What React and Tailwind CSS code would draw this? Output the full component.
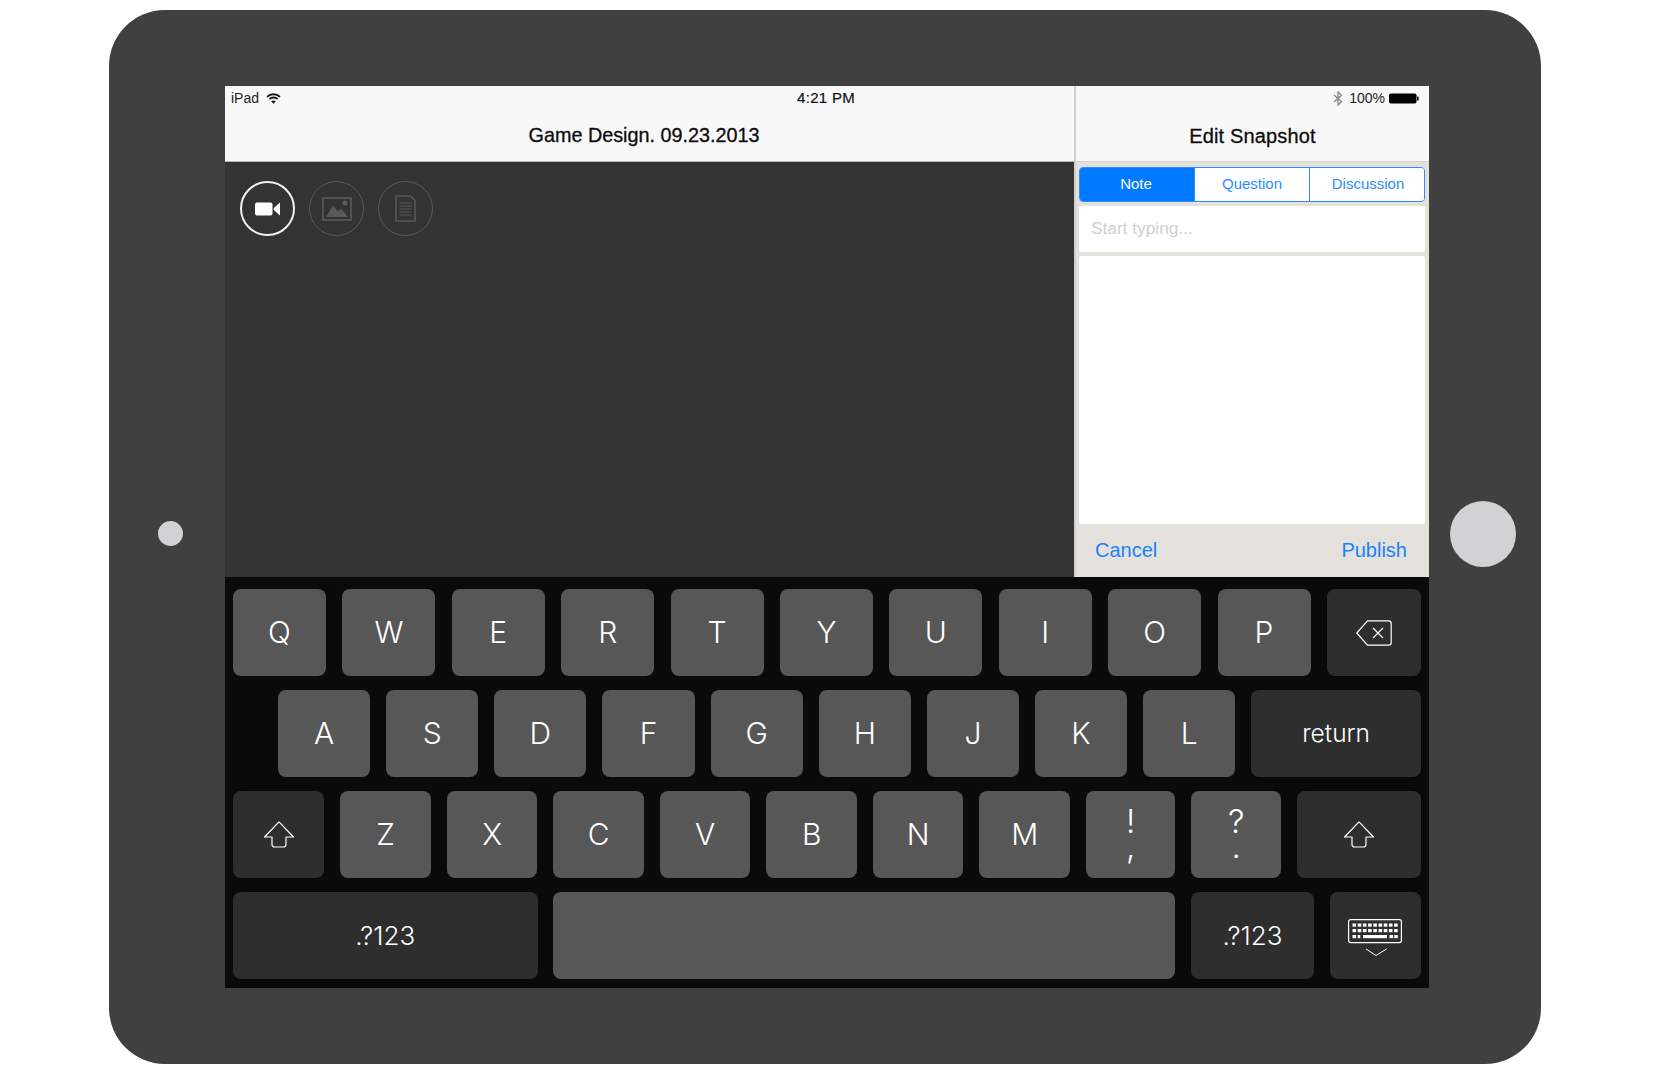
import React from "react";

const sans = "font-['Liberation_Sans',Arial,sans-serif]";

function Key({ children, dark, className = "" }) {
  return (
    <div
      className={`h-[87px] rounded-[8px] flex items-center justify-center text-white font-['Inter',sans-serif] font-[260] ${
        dark ? "bg-[#2e2e2e]" : "bg-[#575757]"
      } ${className}`}
    >
      {children}
    </div>
  );
}

function Letter({ k, w }) {
  return (
    <Key className={`${w} text-[30px]`}>
      {k}
    </Key>
  );
}

function PunctKey({ chars }) {
  return (
    <Key className="w-[89.5px] pb-[2px]">
      <span className="text-center text-[33px] leading-[25px] font-light whitespace-pre-line">{chars}</span>
    </Key>
  );
}

function ShiftIcon() {
  return (
    <svg width="30" height="27" viewBox="0 0 30 27" fill="none" stroke="white" strokeWidth="1.2" strokeLinejoin="round">
      <path d="M15 .8 L29.5 16 H22 V23.5 a2.5 2.5 0 0 1 -2.5 2.5 H10.5 a2.5 2.5 0 0 1 -2.5 -2.5 V16 H.5 Z" />
    </svg>
  );
}

function BackspaceIcon() {
  return (
    <svg width="36" height="26" viewBox="0 0 36 26" fill="none" stroke="white" strokeWidth="1.2" strokeLinejoin="round">
      <path d="M.8 13 L11.5 .8 H32.5 a2.7 2.7 0 0 1 2.7 2.7 V22.5 a2.7 2.7 0 0 1 -2.7 2.7 H11.5 Z" />
      <path d="M17 8 L27 18 M27 8 L17 18" />
    </svg>
  );
}

function KeyboardIcon() {
  const cols = [0, 1, 2, 3, 4, 5, 6, 7, 8];
  return (
    <svg width="54" height="40" viewBox="0 0 54 40" fill="none">
      <rect x=".6" y=".6" width="52.8" height="23" rx="2" stroke="white" strokeWidth="1.2" />
      {cols.map((c) => (
        <rect key={`a${c}`} x={4.5 + c * 5.2} y="4.5" width="3.6" height="3.2" fill="white" />
      ))}
      {cols.map((c) => (
        <rect key={`b${c}`} x={4.5 + c * 5.2} y="10" width="3.6" height="3.2" fill="white" />
      ))}
      <rect x="4.5" y="16" width="3.6" height="3.2" fill="white" />
      <rect x="9.7" y="16" width="2.6" height="3.2" fill="white" />
      <rect x="15" y="16" width="24" height="3.2" fill="white" />
      <rect x="41.5" y="16" width="3.6" height="3.2" fill="white" />
      <rect x="46.2" y="16" width="3.6" height="3.2" fill="white" />
      <path d="M18 30 L28 36.5 L38.5 30" stroke="white" strokeWidth="1" />
    </svg>
  );
}

function WifiIcon() {
  return (
    <svg width="15" height="11" viewBox="0 0 15 11" fill="none" stroke="#111" strokeWidth="1.8">
      <path d="M1 3.8 C4.6 .4 10.4 .4 14 3.8" />
      <path d="M3.4 6 C5.6 4 9.4 4 11.6 6" />
      <path d="M7.5 10.8 L5.2 8.2 C6.6 7.2 8.4 7.2 9.8 8.2 Z" fill="#111" stroke="none" />
    </svg>
  );
}

function BluetoothIcon() {
  return (
    <svg width="10" height="15" viewBox="0 0 10 15" fill="none" stroke="#8c8c8c" strokeWidth="1.4">
      <path d="M1 4 L8.5 10.8 L5 14 V1 L8.5 4.2 L1 11" />
    </svg>
  );
}

function BatteryIcon() {
  return (
    <svg width="30" height="11" viewBox="0 0 30 11">
      <rect x="0" y="0.5" width="27.5" height="10" rx="1.8" fill="#000" />
      <rect x="28" y="3.5" width="1.6" height="4" rx=".6" fill="#000" />
    </svg>
  );
}

function RoundButton({ active, children }) {
  return (
    <div
      className={`w-[55px] h-[55px] rounded-full flex items-center justify-center ${
        active ? "border-2 border-[#f2f2f2]" : "border border-[#5a5a5a]"
      }`}
    >
      {children}
    </div>
  );
}

export default function App() {
  return (
    <div className={`w-[1680px] h-[1075px] bg-white overflow-hidden pt-[10px] pl-[109px] ${sans}`}>
      <div className="w-[1432px] h-[1054px] bg-[#404040] rounded-[56px] flex items-center">
        {/* side dot */}
        <div className="w-[116px] flex justify-center pl-[6px] pb-[8px]">
          <div className="w-[25px] h-[25px] rounded-full bg-[#d1d2d4]" />
        </div>

        <div className="w-[1204px] h-[902px] flex flex-col">
          <div className="h-[491px] flex">
            <div className="w-[849px] flex flex-col">
              <div className="h-[76px] bg-[#f8f8f8] border-b border-[#b5b5b5] flex flex-col">
                <div className="h-[24px] pl-[6px] pr-[219px] flex items-center text-[14px] text-[#222]">
                  <span>iPad</span>
                  <span className="ml-[7px]"><WifiIcon /></span>
                  <span className="ml-auto text-[15px] tracking-[0.3px] text-[#111] [-webkit-text-stroke:0.2px_#111]">4:21 PM</span>
                </div>
                <div className="flex-1 flex items-center justify-center text-[19.8px] text-[#0c0c0c] pr-[11px] pt-[1px] [-webkit-text-stroke:0.3px_#0c0c0c]">
                  Game Design. 09.23.2013
                </div>
              </div>
              <div className="flex-1 bg-[#333333] pt-[19px] pl-[15px] flex gap-[14px] items-start">
                <RoundButton active>
                  <svg width="26" height="14" viewBox="0 0 26 14" fill="white" className="ml-[1px]">
                    <rect x="0" y="0.5" width="17.5" height="13" rx="2" />
                    <path d="M18.8 6 L25 .5 V13.5 L18.8 8 Z" />
                  </svg>
                </RoundButton>
                <RoundButton>
                  <svg width="30" height="24" viewBox="0 0 30 24" fill="none">
                    <rect x="1" y="1" width="28" height="22" stroke="#5a5a5a" strokeWidth="1.6" />
                    <path d="M4 20 L11 8.5 L16 14.5 L19 11.5 L26 20 Z" fill="#5a5a5a" />
                    <circle cx="23" cy="6" r="2.6" fill="#5a5a5a" />
                  </svg>
                </RoundButton>
                <RoundButton>
                  <svg width="21" height="27" viewBox="0 0 21 27" fill="none" stroke="#5a5a5a">
                    <path d="M1 1 H15.5 L20 5.5 V26 H1 Z" strokeWidth="1.5" />
                    <path d="M4.5 8 H16.5 M4.5 11 H16.5 M4.5 14 H16.5 M4.5 17 H16.5 M4.5 20 H16.5" strokeWidth="1.2" />
                  </svg>
                </RoundButton>
              </div>
            </div>

            {/* edit snapshot panel */}
            <div className="flex-1 flex flex-col bg-[#e4e1dc] border-l-2 border-[#cfcfcb]">
              <div className="h-[76px] bg-[#f8f8f8] border-b border-[#cfcfcb] flex flex-col">
                <div className="h-[24px] pr-[10px] flex items-center justify-end text-[14px] text-[#222]">
                  <BluetoothIcon />
                  <span className="ml-[6px]">100%</span>
                  <span className="ml-[4px]"><BatteryIcon /></span>
                </div>
                <div className="flex-1 flex items-center justify-center text-[20px] tracking-[0.15px] text-[#0c0c0c] [-webkit-text-stroke:0.3px_#0c0c0c]">
                  Edit Snapshot
                </div>
              </div>
              <div className="flex-1 flex flex-col pl-[3px] pr-[4px] pt-[5px]">
                <div className="h-[35px] flex rounded-[4px] overflow-hidden border-[1.5px] border-[#2d8cff] text-[15px]">
                  <div className="w-[114px] pr-[2px] flex items-center justify-center bg-[#007aff] text-white">Note</div>
                  <div className="w-[116px] flex items-center justify-center bg-white text-[#2d8cff] border-l-[1.5px] border-r-[1.5px] border-[#2d8cff]">Question</div>
                  <div className="flex-1 pl-[2px] flex items-center justify-center bg-white text-[#2d8cff]">Discussion</div>
                </div>
                <div className="h-[46px] mt-[4px] bg-white rounded-[2px] flex items-center pl-[12px] text-[17.3px] text-[#cfcfcf]">
                  Start typing...
                </div>
                <div className="h-[268px] mt-[4px] bg-white rounded-[2px]" />
                <div className="flex-1 flex items-center justify-between pl-[16px] pr-[18px] pb-[1px] text-[20px] text-[#1a82fb]">
                  <span>Cancel</span>
                  <span>Publish</span>
                </div>
              </div>
            </div>
          </div>

          {/* keyboard */}
          <div className="flex-1 bg-[#0a0a0a] px-[8px] pt-[12px] flex flex-col gap-[14px]">
            <div className="flex gap-[16.4px]">
              {["Q", "W", "E", "R", "T", "Y", "U", "I", "O", "P"].map((k) => (
                <Letter key={k} k={k} w="w-[93px]" />
              ))}
              <Key dark className="flex-1"><BackspaceIcon /></Key>
            </div>
            <div className="flex gap-[16px] pl-[45px]">
              {["A", "S", "D", "F", "G", "H", "J", "K", "L"].map((k) => (
                <Letter key={k} k={k} w="w-[92.15px]" />
              ))}
              <Key dark className="flex-1 text-[24.5px]">return</Key>
            </div>
            <div className="flex gap-[16px]">
              <Key dark className="w-[91.4px]"><ShiftIcon /></Key>
              {["Z", "X", "C", "V", "B", "N", "M"].map((k) => (
                <Letter key={k} k={k} w="w-[90.5px]" />
              ))}
              <PunctKey chars={"!\n,"} />
              <PunctKey chars={"?\n."} />
              <Key dark className="flex-1"><ShiftIcon /></Key>
            </div>
            <div className="flex gap-[15.8px]">
              <Key dark className="w-[304.5px] text-[26px]">.?123</Key>
              <Key className="w-[621.6px]" />
              <Key dark className="w-[123.5px] text-[26px]">.?123</Key>
              <Key dark className="flex-1 pt-[7px]"><KeyboardIcon /></Key>
            </div>
          </div>
        </div>

        {/* home button */}
        <div className="flex-1 flex justify-center pr-[5px] pb-[7px]">
          <div className="w-[66px] h-[66px] rounded-full bg-[#d1d2d4]" />
        </div>
      </div>
    </div>
  );
}
